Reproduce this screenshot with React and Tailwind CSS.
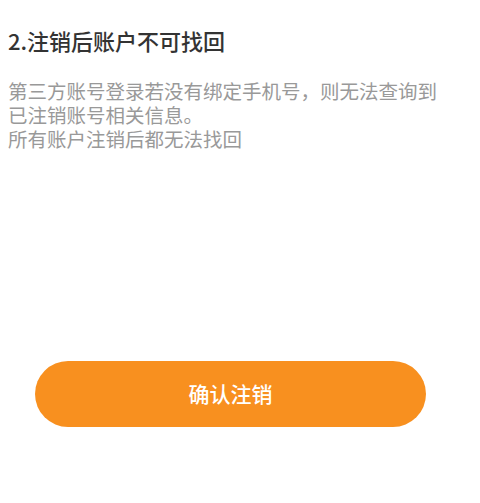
import React from 'react';

const App = () => {
  return (
    <div className="w-[480px] h-[503px] bg-white flex flex-col font-['Noto_Sans_CJK_SC','Noto_Sans',sans-serif]">
      <div className="pl-2 pr-2 pt-[25px]">
        <h1 className="text-[22px] leading-[30px] font-medium text-[#333333]">2.注销后账户不可找回</h1>
        <div className="mt-[24px] text-[19.5px] leading-[24px] text-[#999999]">
          <p>
            第三方账号登录若没有绑定手机号，则无法查询到
            <br />
            已注销账号相关信息。
          </p>
          <p>所有账户注销后都无法找回</p>
        </div>
      </div>

      <div className="mt-auto mb-[76px] px-[35px]">
        <button className="w-[391px] h-[66px] rounded-full bg-[#F8901F] text-white text-[21px] font-medium">
          确认注销
        </button>
      </div>
    </div>
  );
};

export default App;
